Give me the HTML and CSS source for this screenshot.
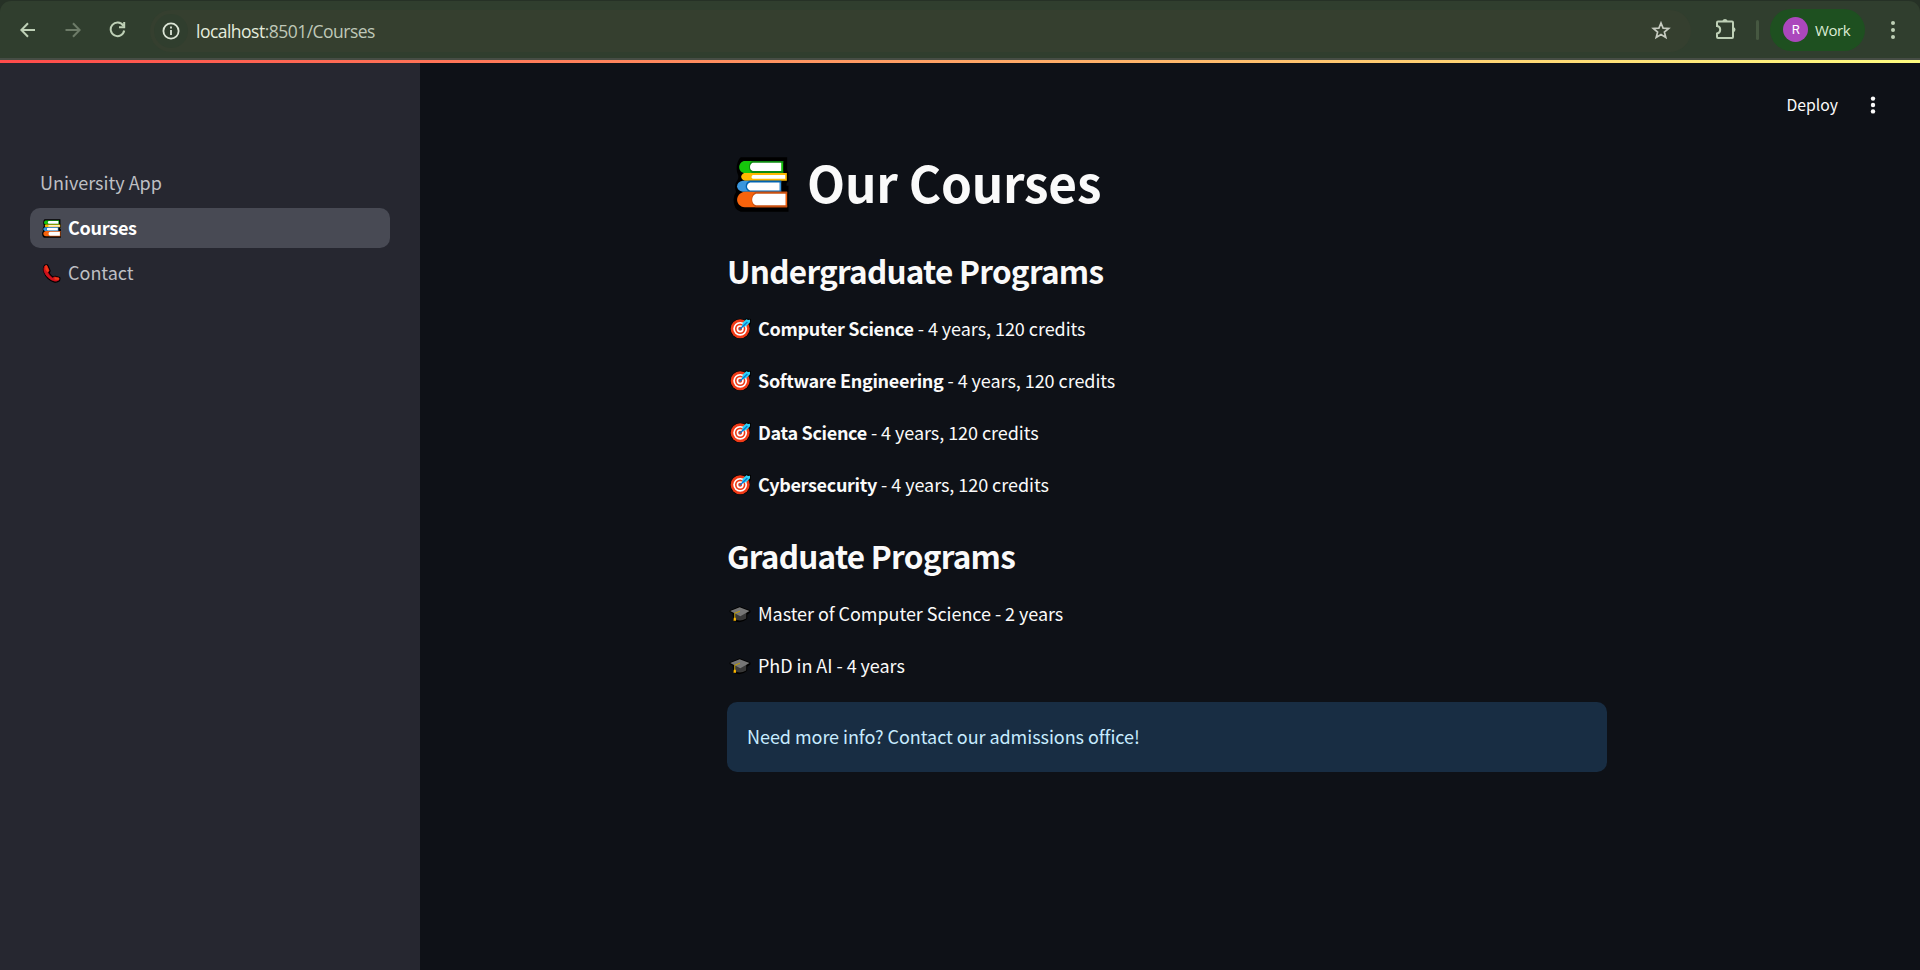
FILE: index.html
```html
<!DOCTYPE html>
<html lang="en">
<head>
<meta charset="utf-8">
<title>Courses</title>
<link rel="stylesheet" href="styles.css">
</head>
<body>
<svg class="sprite" aria-hidden="true">
  <symbol id="books" viewBox="25 21 168 166">
    <path d="M48 22H188V60L192 68V94L186 100V108H192V186H48Q27 182 26 150Q26 136 34 127Q25 105 38 91Q42 82 40 76Q32 58 38 38Q40 27 48 22Z" fill="#000"/>
    <path d="M57 33H176V69H57C40 67 37 39 57 33Z" fill="#16c60c"/>
    <path d="M82 33H176V38H170V63H176V69H82C70 61 70 40 82 33Z" fill="#0d8911"/>
    <path d="M84 38H170V63H84C73 59 73 43 84 38Z" fill="#fff"/>
    <path d="M58 69H187V93H60C46 88 46 74 58 69Z" fill="#ffb900"/>
    <path d="M84 75H182V87H84C79 84 79 78 84 75Z" fill="#fff"/>
    <path d="M54 93H170V126H54C31 122 31 97 54 93Z" fill="#3a96dd"/>
    <path d="M74 93H170V98H165V122H170V126H74C59 120 59 99 74 93Z" fill="#0063b1"/>
    <path d="M76 98H165V122H76C64 118 64 102 76 98Z" fill="#fff"/>
    <path d="M58 126H188V173H60C29 169 30 132 58 126Z" fill="#f7630c"/>
    <path d="M92 126H188V132H183V167H188V173H92C76 160 77 138 92 126Z" fill="#ca5010"/>
    <path d="M94 132H183V167H94C78 162 79 137 94 132Z" fill="#fff"/>
  </symbol>
  <symbol id="phone" viewBox="0 0 54 56">
    <path d="M8 5L14 4L21 20L18 27Q24 36 31 41L38 38L50 42L49 48Q43 53 35 51Q14 45 6 22Q3 12 8 5Z" fill="#000" stroke="#000" stroke-width="7" stroke-linejoin="round"/>
    <path d="M7 6L13 4L20 19L16 26Q22 36 30 41L36 38L49 41V47Q42 52 35 50Q13 43 5 21Q3 12 7 6Z" fill="#d0121c" stroke="#d0121c" stroke-width="2"/>
    <path d="M8 5L13 4L20 19L15 24L9 16ZM36 38L50 41L48 47L36 46Z" fill="#f03a17"/>
  </symbol>
  <symbol id="target" viewBox="0 0 64 64">
    <circle cx="31" cy="33" r="30.5" fill="#000"/>
    <path d="M39 17L48 1L64 3L63 18L51 27Z" fill="#000"/>
    <circle cx="31" cy="33" r="29" fill="#f03a17"/>
    <circle cx="31" cy="33" r="21" fill="#fff"/>
    <circle cx="31" cy="33" r="16" fill="#f03a17"/>
    <circle cx="31" cy="33" r="11" fill="#fff"/>
    <circle cx="31" cy="33" r="6" fill="#f03a17"/>
    <path d="M36 27L39 14L50 4L55 6L61 5V13L50 24L39 28Z" fill="#31d2f7"/>
    <path d="M29 35L53 12" stroke="#0078d4" stroke-width="4"/>
  </symbol>
  <symbol id="cap" viewBox="0 0 66 52">
    <path d="M1 14L32 1L65 14V19L55 27V39Q34 57 13 44L10 23L1 18Z" fill="#000"/>
    <path d="M15 20H52V38Q34 50 15 40Z" fill="#383838"/>
    <path d="M3 15L32 4L62 15L34 31Z" fill="#767676"/>
    <path d="M33 16L17 22V40" fill="none" stroke="#c19c00" stroke-width="3"/>
    <path d="M14 36H20L21 45H13Z" fill="#ffb900"/>
  </symbol>
</svg>

<header class="frame">
  <div class="toolbar">
    <div class="nav-buttons">
      <svg width="16" height="16" viewBox="0 0 16 16"><path d="M15 8H2M8 1.2L1.4 8L8 14.8"/></svg>
      <svg class="dim" width="16" height="16" viewBox="0 0 16 16"><path d="M0.5 8H14M8 1.2L14.6 8L8 14.8"/></svg>
      <svg width="17" height="17" viewBox="0 0 17 17"><path d="M14.2 4.6A6.8 6.8 0 1 0 15.2 9.5M15.2 1V6.2H10"/></svg>
    </div>
    <div class="omnibox">
      <span class="site-info"><svg width="18" height="18" viewBox="0 0 18 18"><circle cx="9" cy="9" r="7.6"/><path d="M9 8V13M9 4.6V6.4"/></svg></span>
      <span class="url"><span class="host">localhost</span>:8501/Courses</span>
      <svg class="star" width="20" height="19" viewBox="0 0 20 19"><path d="M10 2L12.1 7.1L17.7 7.5L13.4 11.1L14.8 16.5L10 13.6L5.2 16.5L6.6 11.1L2.3 7.5L7.9 7.1Z"/></svg>
    </div>
    <svg class="puzzle" width="22" height="22" viewBox="0 0 22 22"><path d="M3 3.6H17Q18 3.6 18 4.6V19Q18 20 17 20H3Q2 20 2 19V15.5Q5.2 15 5.2 11.8Q5.2 8.6 2 8.1V4.6Q2 3.6 3 3.6Z"/><path class="solid" d="M7.4 3A2.7 2.7 0 0 1 12.6 3ZM18.5 9A2.7 2.7 0 0 1 18.5 14.2Z"/></svg>
    <span class="divider"></span>
    <div class="profile"><span class="avatar">R</span><span>Work</span></div>
    <svg class="kebab" width="6" height="20" viewBox="0 0 6 20"><circle cx="3" cy="3" r="2"/><circle cx="3" cy="10" r="2"/><circle cx="3" cy="17" r="2"/></svg>
  </div>
</header>
<div class="decoration"></div>

<div class="app">
  <nav class="sidebar">
    <a class="link">University App</a>
    <a class="link active"><svg class="link-icon"><use href="#books"/></svg><span>Courses</span></a>
    <a class="link"><svg class="link-icon"><use href="#phone"/></svg><span>Contact</span></a>
  </nav>
  <div class="content">
    <div class="app-header">
      <span class="deploy">Deploy</span>
      <svg width="6" height="18" viewBox="0 0 6 18"><circle cx="3" cy="2.6" r="2.2"/><circle cx="3" cy="9" r="2.2"/><circle cx="3" cy="15.4" r="2.2"/></svg>
    </div>
    <main class="block">
      <h1><svg class="title-icon"><use href="#books"/></svg><span>Our Courses</span></h1>
      <h2 class="under">Undergraduate Programs</h2>
      <div class="list">
        <p><svg class="target"><use href="#target"/></svg><span><b>Computer Science</b> - 4 years, 120 credits</span></p>
        <p><svg class="target"><use href="#target"/></svg><span><b>Software Engineering</b> - 4 years, 120 credits</span></p>
        <p><svg class="target"><use href="#target"/></svg><span><b>Data Science</b> - 4 years, 120 credits</span></p>
        <p><svg class="target"><use href="#target"/></svg><span><b>Cybersecurity</b> - 4 years, 120 credits</span></p>
      </div>
      <h2 class="grad">Graduate Programs</h2>
      <div class="list">
        <p><svg class="cap"><use href="#cap"/></svg><span>Master of Computer Science - 2 years</span></p>
        <p><svg class="cap"><use href="#cap"/></svg><span>PhD in AI - 4 years</span></p>
      </div>
      <div class="alert">Need more info? Contact our admissions office!</div>
    </main>
  </div>
</div>
</body>
</html>
```
FILE: styles.css
```css
* { box-sizing: border-box; }
body {
  margin: 0;
  height: 970px;
  overflow: hidden;
  display: flex;
  flex-direction: column;
  background: #0e1117;
  color: #fafafa;
  font: 18px/32px "Noto Sans CJK SC", "Noto Sans CJK JP", sans-serif;
}
.sprite { position: absolute; width: 0; height: 0; }
svg { display: block; flex: none; }

.frame { flex: none; padding-top: 1px; background: #263126; }
.toolbar {
  height: 59px;
  display: flex;
  align-items: center;
  background: #303e2e;
  border-bottom: 2px solid #464d45;
  border-radius: 11px 11px 0 0;
  color: #dcebd5;
}
.toolbar svg { fill: none; stroke: #bed0b6; stroke-width: 2; }
.nav-buttons { display: flex; gap: 29px; padding-left: 20px; width: 150px; align-items: center; }
.nav-buttons .dim { stroke: #6d7b68; margin-right: -1px; }
.omnibox {
  width: 1541px;
  height: 42px;
  margin-top: 2px;
  border-radius: 21px;
  background: #353f2f;
  display: flex;
  align-items: center;
}
.site-info {
  width: 34px; height: 34px;
  margin-left: 4px;
  border-radius: 50%;
  background: #303e2e;
  display: flex;
  align-items: center;
  justify-content: center;
}
.toolbar .site-info svg { stroke: #dce5d6; stroke-width: 1.8; }
.url {
  margin-left: 8px;
  font-family: "Open Sans", sans-serif;
  font-size: 17.5px;
  letter-spacing: -0.52px;
  color: #bfc8b8;
}
.url .host { color: #e4ecdd; }
.toolbar .star { margin-left: auto; margin-right: 20px; stroke: #c6cbc0; stroke-width: 1.7; }
.puzzle { margin-left: 24px; margin-top: -1px; }
.toolbar .puzzle .solid { fill: #bed0b6; stroke: none; }
.divider { width: 3px; height: 20px; border-radius: 2px; background: #465841; margin-left: 19px; }
.profile {
  width: 95px; height: 42px;
  margin-left: 11px;
  border-radius: 21px;
  background: #1e5020;
  display: flex;
  align-items: center;
  gap: 7px;
  padding-left: 13px;
  font: 500 15px/20px "Open Sans", sans-serif;
  letter-spacing: -0.4px;
}
.avatar {
  width: 25px; height: 25px;
  border-radius: 50%;
  background: #ab47bc;
  color: #fff;
  font: 13px/25px Roboto, sans-serif;
  text-align: center;
}
.toolbar .kebab { margin-left: 25px; fill: #bed0b6; stroke: none; }
.decoration { height: 3px; flex: none; background: linear-gradient(90deg, #ff4b4b, #fffd80); }

.app { flex: 1; display: flex; }
.sidebar {
  width: 420px;
  background: #262730;
  padding: 100px 30px 0;
  display: flex;
  flex-direction: column;
  gap: 5px;
}
.link {
  height: 40px;
  border-radius: 10px;
  padding: 0 10px 2px;
  display: flex;
  align-items: center;
  gap: 7px;
  color: #bebfc3;
}
.link.active { background: #484a54; color: #fff; font-weight: 700; letter-spacing: -0.25px; }
.link-icon { width: 19px; height: 19px; margin: 2px 0 0 2px; }

.content { flex: 1; }
.app-header {
  height: 75px;
  padding: 9px 44px 0 0;
  display: flex;
  justify-content: flex-end;
  align-items: center;
  gap: 32px;
  font-size: 15.75px;
}
.app-header svg { fill: #fafafa; }
.deploy { margin-top: -1px; }
.block { width: 880px; margin: 9px 0 0 307px; letter-spacing: -0.05px; }
h1, h2, p { margin: 0; }
h1 {
  display: flex;
  align-items: center;
  font-size: 49.5px;
  line-height: 66px;
  font-weight: 700;
  letter-spacing: -0.2px;
}
h1 span { padding-top: 2px; margin-bottom: -2px; }
.title-icon { width: 56px; height: 55px; margin: 9px 18px 0 6px; }
h2 { font-size: 31.5px; line-height: 38px; font-weight: 600; letter-spacing: -0.74px; white-space: nowrap; }
.under { margin: 38px 0 23px; }
.grad { margin: 36px 0 23px; }
.list { display: flex; flex-direction: column; gap: 20px; }
.list p { display: flex; align-items: center; }
.list b { font-weight: 600; letter-spacing: -0.31px; }
.target { width: 21px; height: 21px; margin: 1px 7px 0 3px; }
.cap { width: 22px; height: 17px; margin: 3px 7px 0 2px; }
.alert {
  height: 70px;
  margin-top: 21px;
  border-radius: 10px;
  padding: 18px 20px;
  background: #182d43;
  color: #c7ebff;
}
```
